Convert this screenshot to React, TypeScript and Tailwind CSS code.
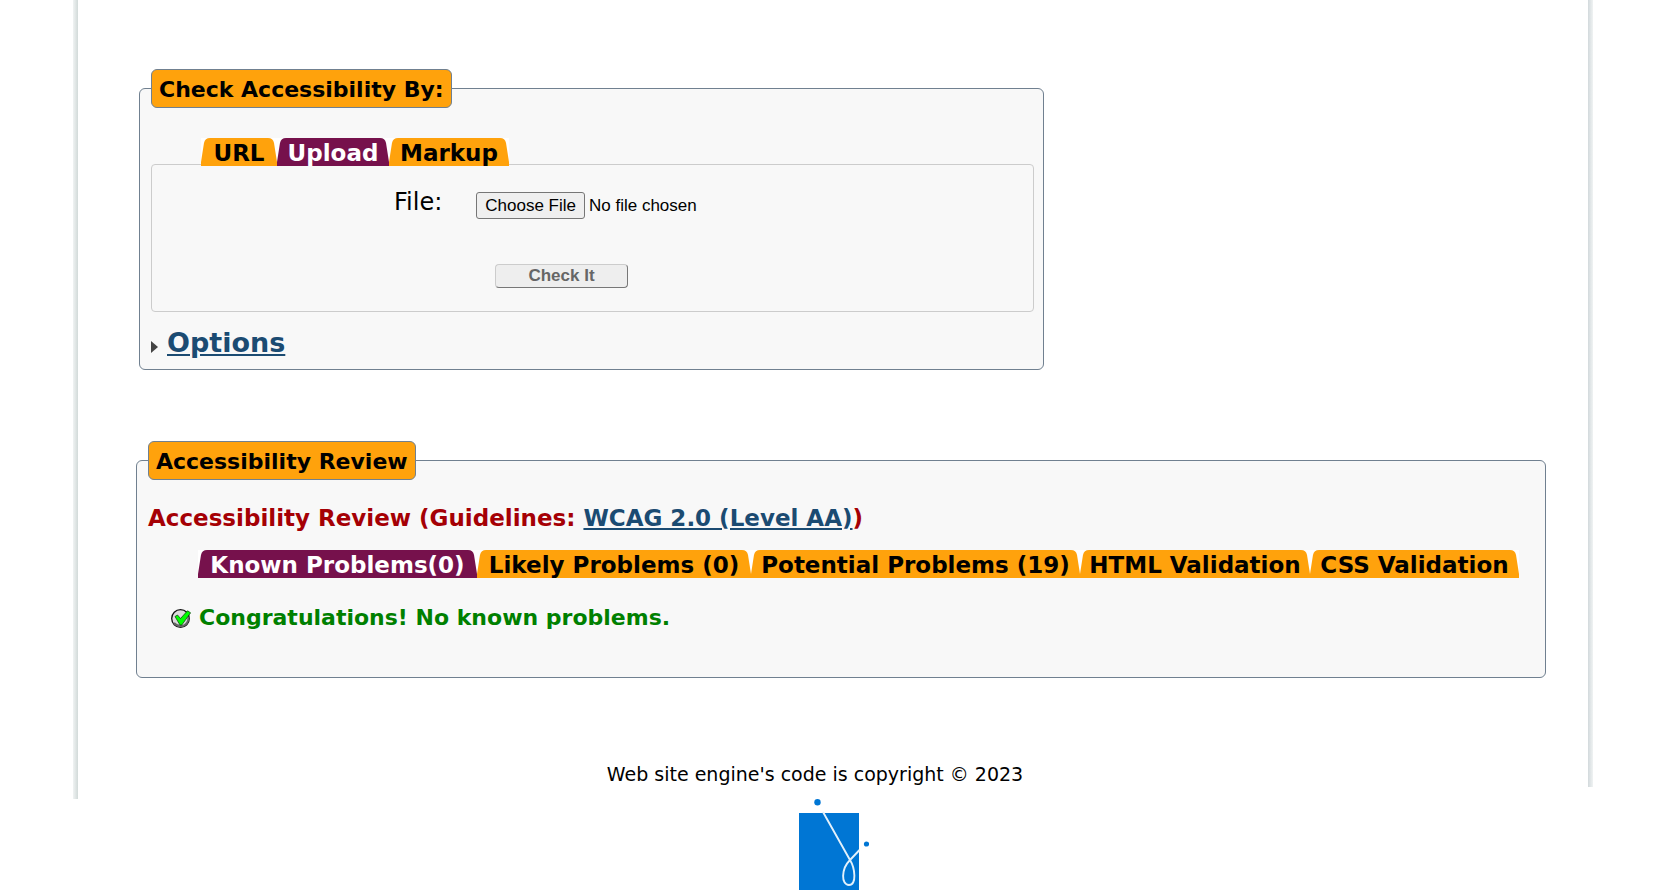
import { useState, type ReactNode } from 'react';

type TabItem = { label: string; width: string };
type TabProps = { item: TabItem; active: boolean; onSelect: () => void };

function Tab({ item, active, onSelect }: TabProps) {
  const tone = active ? 'text-[#76114c]' : 'text-[#ffa20c]';
  const fill = active ? 'bg-[#76114c] text-white' : 'bg-[#ffa20c] text-black';
  return (
    <button
      type="button"
      role="tab"
      aria-selected={active}
      onClick={onSelect}
      className={`flex h-7 shrink-0 cursor-pointer bg-white text-[23px] leading-[26px] font-bold ${item.width}`}
    >
      <svg viewBox="0 0 9 28" className={`h-7 w-[9px] shrink-0 ${tone}`} fill="currentColor" aria-hidden="true">
        <path d="M0 28V24L3 5Q4 0 9 0V28Z" />
      </svg>
      <span className={`h-7 flex-1 pt-0.5 whitespace-nowrap ${fill}`}>{item.label}</span>
      <svg viewBox="0 0 9 28" className={`h-7 w-[9px] shrink-0 ${tone}`} fill="currentColor" aria-hidden="true">
        <path d="M9 28V24L6 5Q5 0 0 0V28Z" />
      </svg>
    </button>
  );
}

function TabBar({ items, initial, name }: { items: TabItem[]; initial: number; name: string }) {
  const [current, setCurrent] = useState(initial);
  return (
    <div role="tablist" aria-label={name} className="relative z-10 ml-[50px] flex">
      {items.map((item, i) => (
        <Tab key={item.label} item={item} active={i === current} onSelect={() => setCurrent(i)} />
      ))}
    </div>
  );
}

const inputTabs: TabItem[] = [
  { label: 'URL', width: 'min-w-[76px]' },
  { label: 'Upload', width: 'min-w-[112px]' },
  { label: 'Markup', width: 'min-w-[120px]' },
];

const resultTabs: TabItem[] = [
  { label: 'Known Problems(0)', width: 'min-w-[279px]' },
  { label: 'Likely Problems (0)', width: 'min-w-[274px]' },
  { label: 'Potential Problems (19)', width: 'min-w-[329px]' },
  { label: 'HTML Validation', width: 'min-w-[230px]' },
  { label: 'CSS Validation', width: 'min-w-[209px]' },
];

function Panel({ title, className, children }: { title: string; className: string; children: ReactNode }) {
  return (
    <fieldset className={`rounded-md border border-[#708090] bg-[#f8f8f8] pr-[9px] pl-[11px] ${className}`}>
      <legend className="rounded-md border border-[#708090] bg-[#ffa20c] px-[7px] pt-0.5 text-[22px] leading-[35px] font-bold">
        {title}
      </legend>
      {children}
    </fieldset>
  );
}

function CheckIcon() {
  return (
    <svg viewBox="0 0 20 19" className="h-[19px] w-5" aria-hidden="true">
      <circle cx="9.500" cy="9.500" r="8.800" fill="#dcdcdc" stroke="#111" strokeWidth="1.300" />
      <path d="M3 14Q7 18.500 13 16.500Q17.500 14 17.500 8" fill="none" stroke="#666" strokeWidth="2" />
      <path d="M4 7.500L6.500 6L9.500 9.500L16.500 1.800L19.600 3.800L10.800 16H9Z" fill="#0f0" stroke="#063806" strokeWidth=".7" />
    </svg>
  );
}

function Logo() {
  return (
    <svg viewBox="0 0 70 91" className="h-[91px] w-[70px]" role="img" aria-label="Site logo">
      <rect y="14" width="60" height="77" fill="#0076d4" />
      <circle cx="18.500" cy="3.200" r="3.200" fill="#0076d4" />
      <circle cx="67.500" cy="45" r="2.600" fill="#0076d4" />
      <path
        d="M24 13L51 61C56 69 58 86 50 86C42 86 42 70 51 61L60.500 51"
        fill="none"
        stroke="#e3f1fb"
        strokeWidth="1.900"
      />
    </svg>
  );
}

export default function App() {
  return (
    <div className="bg-white font-['DejaVu_Sans',sans-serif] text-black">
      <div className="mr-[60px] ml-[73px] flex">
        <div className="w-[5px] shrink-0 bg-linear-to-r from-[#f0f3f3] to-[#d2dad9]" />
        <main className="min-w-0 flex-1 pt-[69px] pr-[42px] pl-[58px]">
          <form onSubmit={(e) => e.preventDefault()}>
            <Panel title="Check Accessibility By:" className="ml-[3px] w-[905px] max-w-full pb-2">
              <div className="pt-[30px]">
                <TabBar name="Input type" items={inputTabs} initial={1} />
                <div className="-mt-0.5 rounded border border-[#ccc] pt-[23px] pb-[23px]">
                  <div className="ml-[242px] flex items-start gap-[34px]">
                    <label htmlFor="file" className="text-2xl leading-7">
                      File:
                    </label>
                    <input
                      id="file"
                      type="file"
                      className="mt-1 h-[27px] w-[300px] font-['Liberation_Sans',sans-serif] text-[17px] leading-[25px] file:mr-1 file:h-[27px] file:rounded-[3px] file:border file:border-solid file:border-[#767676] file:bg-[#efefef] file:px-2"
                    />
                  </div>
                  <button
                    type="submit"
                    className="mt-[45px] ml-[343px] block h-6 w-[133px] rounded border border-t-[#ccc] border-r-[#777] border-b-[#777] border-l-[#ccc] bg-[#eee] font-['Liberation_Sans',sans-serif] text-[17px] leading-[22px] font-bold text-[#666]"
                  >
                    Check It
                  </button>
                </div>
              </div>
              <div className="flex items-center pt-[13px]">
                <svg viewBox="0 0 7 12" className="mt-2 h-3 w-[7px]" aria-hidden="true">
                  <path d="M0 0L7 6L0 12Z" fill="#444" />
                </svg>
                <a href="#options" className="ml-[9px] text-[27px] leading-9 font-bold text-[#1b4b72] underline">
                  Options
                </a>
              </div>
            </Panel>
          </form>

          <Panel title="Accessibility Review" className="mt-[71px] pb-[43px]">
            <h2 className="pt-[22px] text-[23px] leading-8 font-bold text-[#a50005]">
              Accessibility Review (Guidelines:{' '}
              <a href="#guidelines" className="text-[#1b4b72] underline">
                WCAG 2.0 (Level AA)
              </a>
              )
            </h2>
            <div className="pt-4">
              <TabBar name="Review results" items={resultTabs} initial={0} />
            </div>
            <p className="flex items-center gap-2 pt-6 pl-[23px] text-[22px] leading-8 font-bold text-[#008000]">
              <CheckIcon />
              Congratulations! No known problems.
            </p>
          </Panel>

          <p className="mt-20 mr-[52px] pb-[9px] text-center text-[19px] leading-8">
            Web site engine&apos;s code is copyright © 2023
          </p>
        </main>
        <div className="mb-3 w-[5px] shrink-0 bg-linear-to-r from-[#d2d9dc] to-[#f0f3f3]" />
      </div>
      <footer className="ml-[15px] flex justify-center">
        <Logo />
      </footer>
    </div>
  );
}
